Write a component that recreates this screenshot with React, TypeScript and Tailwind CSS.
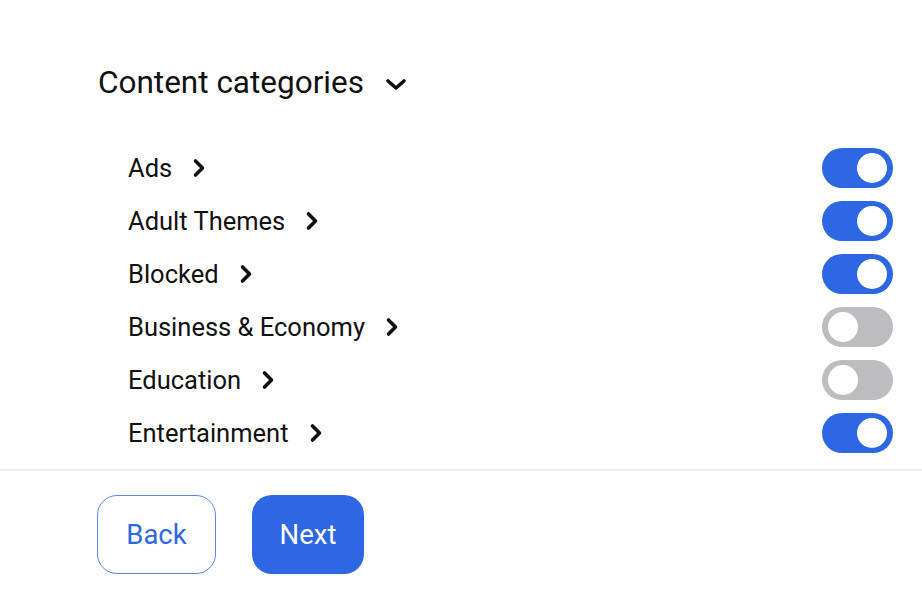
import React from "react";

const rows: { label: string; on: boolean }[] = [
  { label: "Ads", on: true },
  { label: "Adult Themes", on: true },
  { label: "Blocked", on: true },
  { label: "Business & Economy", on: false },
  { label: "Education", on: false },
  { label: "Entertainment", on: true },
];

function ChevronRight() {
  return (
    <svg width="16" height="22" viewBox="0 0 16 22" className="ml-[19px] shrink-0">
      <polyline points="4.5,4 11.5,11 4.5,18" fill="none" stroke="#111" strokeWidth="3.6" strokeLinecap="round" strokeLinejoin="round" />
    </svg>
  );
}

function Toggle({ on }: { on: boolean }) {
  return (
    <div
      className={
        "flex h-[40px] w-[71px] items-center rounded-full px-[6px] " +
        (on ? "justify-end bg-[#2e67e4]" : "justify-start bg-[#bdbdc1]")
      }
    >
      <div className="h-[30px] w-[30px] rounded-full bg-white" />
    </div>
  );
}

export default function App() {
  return (
    <div className="h-[596px] w-[922px] bg-white text-[#111]" style={{ fontFamily: "Roboto, 'Liberation Sans', sans-serif" }}>
      <div className="flex items-center pl-[98px] pt-[64px]">
        <span className="text-[31.5px] leading-[38px]">Content categories</span>
        <svg width="24" height="15" viewBox="0 0 24 15" className="ml-[20px] mt-[3px]">
          <polyline points="4,4 12,11 20,4" fill="none" stroke="#111" strokeWidth="3.6" strokeLinecap="round" strokeLinejoin="round" />
        </svg>
      </div>
      <div className="mt-[39px] flex flex-col pl-[128px] pr-[29px]">
        {rows.map((r) => (
          <div key={r.label} className="flex h-[53px] items-center justify-between">
            <div className="flex items-center">
              <span className="text-[25.5px] leading-[30px]">{r.label}</span>
              <ChevronRight />
            </div>
            <Toggle on={r.on} />
          </div>
        ))}
      </div>
      <div className="mt-[10px] border-t-2 border-[#ececec]" />
      <div className="flex gap-[36px] pl-[97px] pt-[24px]">
        <button className="flex h-[79px] w-[119px] items-center justify-center rounded-[20px] border border-[#5a86ea] bg-white text-[27.5px] text-[#2e67e4]">
          Back
        </button>
        <button className="flex h-[79px] w-[112px] items-center justify-center rounded-[20px] bg-[#2e67e4] text-[27.5px] text-white">
          Next
        </button>
      </div>
    </div>
  );
}
